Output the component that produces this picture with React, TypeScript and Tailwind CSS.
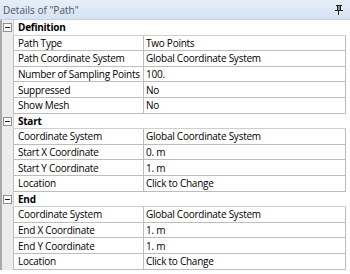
import React from "react";

type Row = { name: string; value: string };
type Section = { title: string; rows: Row[] };

const sections: Section[] = [
    {
        title: "Definition",
        rows: [
            { name: "Path Type", value: "Two Points" },
            { name: "Path Coordinate System", value: "Global Coordinate System" },
            { name: "Number of Sampling Points", value: "100." },
            { name: "Suppressed", value: "No" },
            { name: "Show Mesh", value: "No" },
        ],
    },
    {
        title: "Start",
        rows: [
            { name: "Coordinate System", value: "Global Coordinate System" },
            { name: "Start X Coordinate", value: "0. m" },
            { name: "Start Y Coordinate", value: "1. m" },
            { name: "Location", value: "Click to Change" },
        ],
    },
    {
        title: "End",
        rows: [
            { name: "Coordinate System", value: "Global Coordinate System" },
            { name: "End X Coordinate", value: "1. m" },
            { name: "End Y Coordinate", value: "1. m" },
            { name: "Location", value: "Click to Change" },
        ],
    },
];

const PinIcon = () => (
    <svg width="8" height="10" viewBox="0 0 8 10" className="block">
        <rect x="1" y="0" width="6" height="1" fill="#222" />
        <rect x="2" y="1" width="1" height="4" fill="#222" />
        <rect x="5" y="1" width="1" height="4" fill="#222" />
        <rect x="3" y="1" width="2" height="4" fill="#888" />
        <rect x="0" y="5" width="8" height="1" fill="#222" />
        <rect x="3" y="6" width="1" height="4" fill="#222" />
    </svg>
);

const MinusBox = () => (
    <div className="flex h-[9px] w-[9px] items-center justify-center border border-[#8f8f8f] bg-white">
        <div className="h-px w-[5px] bg-[#222]" />
    </div>
);

const App = () => {
    return (
        <div
            className="h-[274px] w-[350px] overflow-hidden bg-white text-[10px] leading-none tracking-[-0.25px] text-black"
            style={{ fontFamily: '"Open Sans", Lato, sans-serif' }}
        >
            <div className="flex h-[20px] items-center justify-between border-b border-[#c5d2e3] bg-gradient-to-b from-[#e6eef8] to-[#d6e3f3] pl-[3px] pr-[7px]">
                <span className="text-[10px] tracking-normal text-[#4d5560]">Details of "Path"</span>
                <PinIcon />
            </div>
            <div className="flex">
                <div className="w-[346px] border-l-2 border-[#a9a9a9] bg-[#ececec]">
                    {sections.map((section) => (
                        <div key={section.title}>
                            <div className="flex h-[15.6px]">
                                <div className="flex w-[11px] items-center justify-center">
                                    <MinusBox />
                                </div>
                                <div className="flex flex-1 items-center whitespace-nowrap border-b border-l border-[#cfcfcf] bg-white pl-[4px] font-bold">
                                    {section.title}
                                </div>
                            </div>
                            {section.rows.map((row) => (
                                <div key={row.name} className="flex h-[15.6px]">
                                    <div className="w-[11px]" />
                                    <div className="flex w-[131px] items-center whitespace-nowrap border-b border-l border-r border-[#bdbdbd] bg-white pl-[4px]">
                                        {row.name}
                                    </div>
                                    <div className="flex flex-1 items-center whitespace-nowrap border-b border-r border-[#bdbdbd] bg-white pl-[2px]">
                                        {row.value}
                                    </div>
                                </div>
                            ))}
                        </div>
                    ))}
                </div>
                <div className="flex-1 bg-white" />
            </div>
        </div>
    );
};

export default App;
